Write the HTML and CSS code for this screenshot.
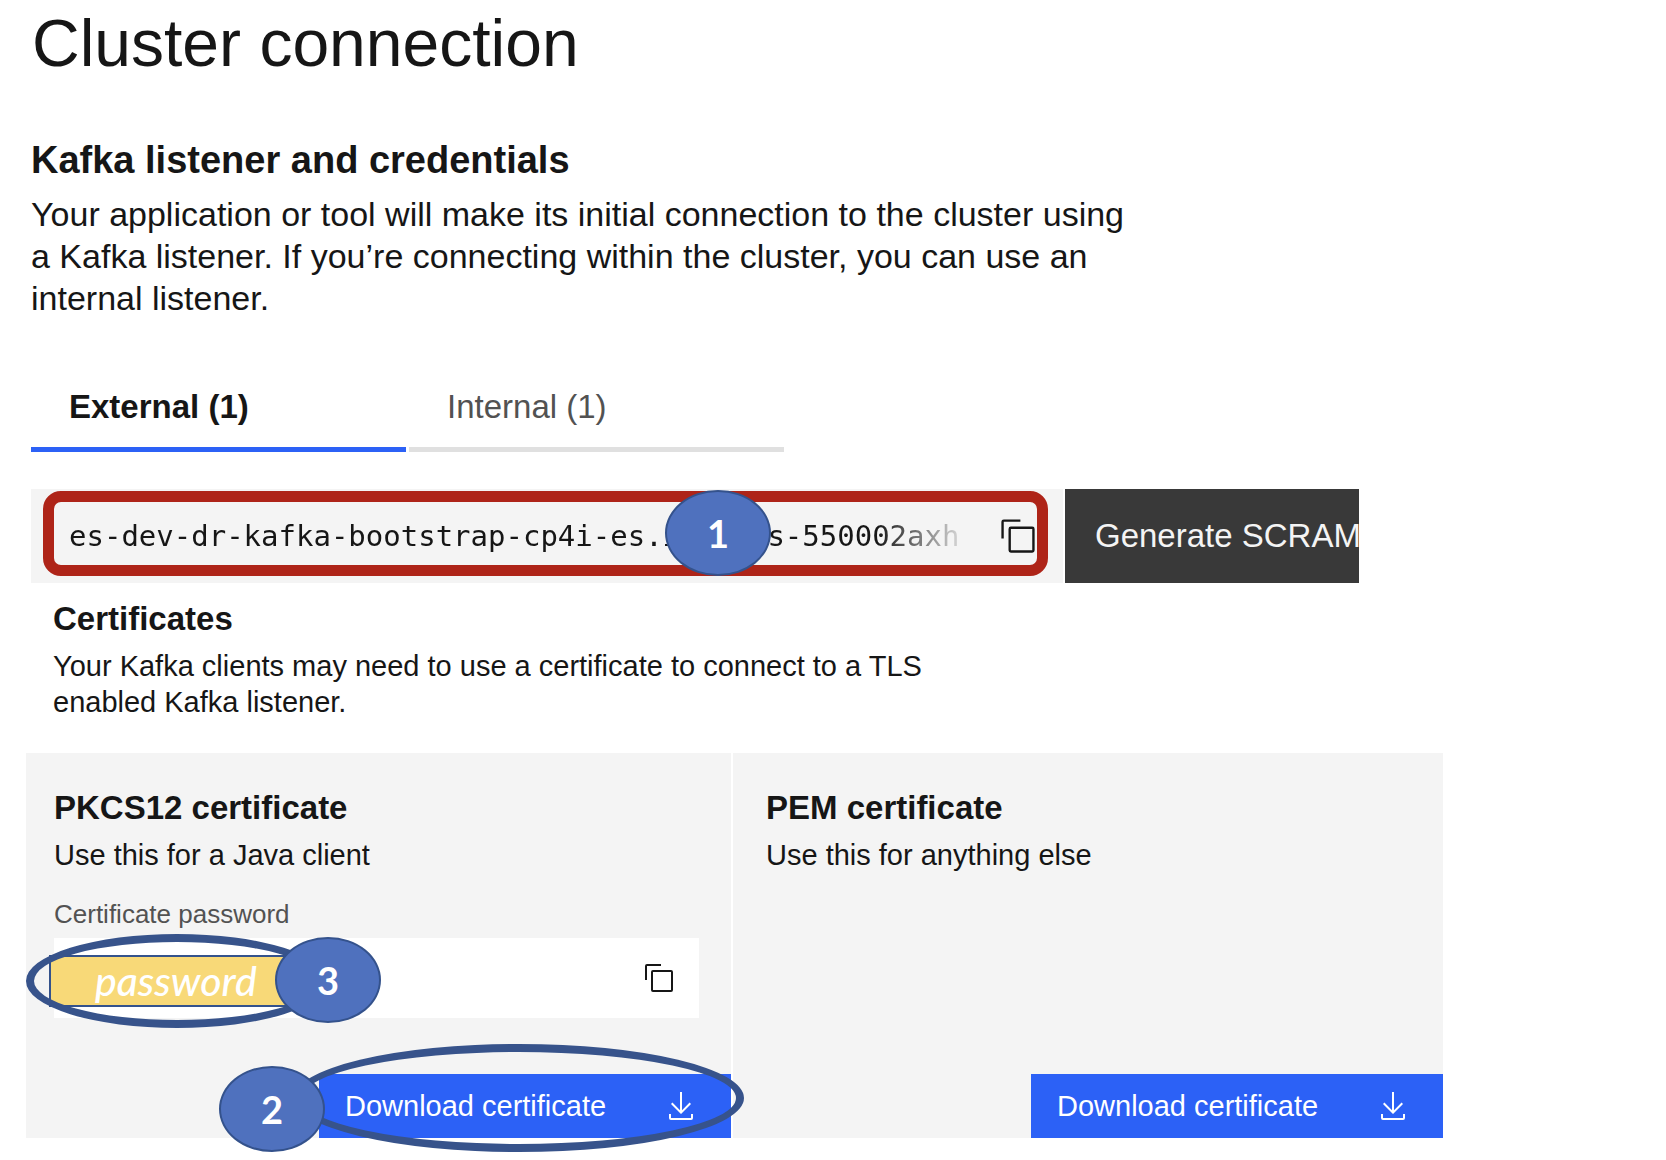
FILE: index.html
```html
<!DOCTYPE html>
<html lang="en">
<head>
  <meta charset="utf-8">
  <title>Cluster connection</title>
  <link rel="stylesheet" href="styles.css">
</head>
<body>
  <svg class="sprite" aria-hidden="true">
    <symbol id="icon-copy" viewBox="0 0 32 32">
      <path d="M28,10V28H10V10H28m0-2H10a2,2,0,0,0-2,2V28a2,2,0,0,0,2,2H28a2,2,0,0,0,2-2V10a2,2,0,0,0-2-2Z"/>
      <path d="M4,18H2V4A2,2,0,0,1,4,2H18V4H4Z"/>
    </symbol>
    <symbol id="icon-download" viewBox="0 0 32 32">
      <path d="M26,24v4H6V24H4v4a2,2,0,0,0,2,2H26a2,2,0,0,0,2-2V24Z"/>
      <path d="M26,14l-1.41-1.41L17,20.17V2H15V20.17L7.41,12.59,6,14,16,24Z"/>
    </symbol>
  </svg>

  <main class="page">
    <h1 class="page-title">Cluster connection</h1>

    <section class="listener">
      <h2 class="section-title">Kafka listener and credentials</h2>
      <p class="lead">Your application or tool will make its initial connection to the cluster using a Kafka listener. If you’re connecting within the cluster, you can use an internal listener.</p>

      <div class="tabs" role="tablist">
        <button class="tab tab-active" role="tab" aria-selected="true">External (1)</button>
        <button class="tab" role="tab" aria-selected="false">Internal (1)</button>
      </div>

      <div class="listener-row">
        <div class="address">
          <input class="address-input" type="text" readonly aria-label="Listener address" value="es-dev-dr-kafka-bootstrap-cp4i-es.itzroks-550002axh">
          <button class="icon-button" aria-label="Copy address"><svg class="icon icon-large"><use href="#icon-copy"/></svg></button>
          <span class="frame"></span>
          <span class="marker marker-one">1</span>
        </div>
        <button class="generate">Generate SCRAM</button>
      </div>
    </section>

    <section class="certificates">
      <h3 class="block-title">Certificates</h3>
      <p class="text certificates-text">Your Kafka clients may need to use a certificate to connect to a TLS enabled Kafka listener.</p>
    </section>

    <div class="cards">
      <section class="card">
        <h3 class="block-title">PKCS12 certificate</h3>
        <p class="text">Use this for a Java client</p>
        <label class="label" for="password">Certificate password</label>
        <div class="password">
          <input class="password-input" id="password" type="text" readonly>
          <button class="icon-button" aria-label="Copy password"><svg class="icon"><use href="#icon-copy"/></svg></button>
          <span class="cover">password</span>
          <span class="oval oval-password"></span>
          <span class="marker marker-three">3</span>
        </div>
        <div class="card-action">
          <button class="download">Download certificate <svg class="icon"><use href="#icon-download"/></svg></button>
          <span class="oval oval-download"></span>
          <span class="marker marker-two">2</span>
        </div>
      </section>
      <section class="card card-pem">
        <h3 class="block-title">PEM certificate</h3>
        <p class="text">Use this for anything else</p>
        <div class="card-action">
          <button class="download">Download certificate <svg class="icon"><use href="#icon-download"/></svg></button>
        </div>
      </section>
    </div>
  </main>
</body>
</html>
```

FILE: styles.css
```css
* {
  box-sizing: border-box;
}

body {
  margin: 0;
  background: #fff;
  color: #161616;
  font-family: "Liberation Sans", Arial, sans-serif;
}

h1, h2, h3, p {
  margin: 0;
}

button, input {
  margin: 0;
  padding: 0;
  border: 0;
  border-radius: 0;
  background: none;
  color: inherit;
  font: inherit;
}

.sprite {
  position: absolute;
  width: 0;
  height: 0;
}

.page {
  padding: 4px 26px 20px;
}

.page-title {
  padding-left: 6px;
  font-size: 66px;
  font-weight: 400;
  line-height: 78px;
}

.listener {
  padding: 54px 0 0 5px;
}

.section-title {
  font-size: 38px;
  line-height: 48px;
}

.lead {
  max-width: 1120px;
  margin-top: 9px;
  font-size: 34px;
  line-height: 42px;
}

.tabs {
  display: flex;
  gap: 3px;
  max-width: 753px;
  margin-top: 52px;
}

.tab {
  flex: 1;
  padding: 16px 38px 20px;
  border-bottom: 5px solid #e0e0e0;
  color: #525252;
  font-size: 33px;
  line-height: 40px;
  text-align: left;
}

.tab-active {
  border-color: #2c61f6;
  color: #161616;
  font-weight: 700;
}

.listener-row {
  display: flex;
  gap: 2px;
  max-width: 1328px;
  margin-top: 37px;
}

.address {
  position: relative;
  display: flex;
  flex: 1;
  align-items: center;
  gap: 26px;
  padding: 0 26px 0 38px;
  background: #f4f4f4;
}

.address-input {
  flex: 1;
  min-width: 0;
  height: 94px;
  font-family: "DejaVu Sans Mono", monospace;
  font-size: 29px;
  -webkit-mask-image: linear-gradient(to right, #000 calc(100% - 96px), transparent);
  mask-image: linear-gradient(to right, #000 calc(100% - 96px), transparent);
}

.generate {
  flex: none;
  width: 294px;
  overflow: hidden;
  padding-left: 30px;
  background: #393939;
  color: #f4f4f4;
  font-size: 33px;
  text-align: left;
  white-space: nowrap;
}

.icon-button {
  display: flex;
}

.icon {
  flex: none;
  width: 32px;
  height: 32px;
  fill: currentColor;
}

.icon-large {
  width: 38px;
  height: 38px;
}

.certificates {
  padding: 16px 0 33px 27px;
}

.block-title {
  font-size: 33px;
  line-height: 40px;
}

.text {
  margin-top: 9px;
  font-size: 29px;
  line-height: 36px;
}

.certificates-text {
  max-width: 900px;
}

.cards {
  display: grid;
  grid-template-columns: 705fr 710fr;
  gap: 2px;
  max-width: 1417px;
}

.card {
  display: flex;
  flex-direction: column;
  min-height: 385px;
  padding: 35px 0 0 28px;
  background: #f4f4f4;
}

.card-pem {
  padding-left: 33px;
}

.label {
  margin-top: 27px;
  color: #525252;
  font-size: 26px;
  line-height: 28px;
}

.password {
  position: relative;
  display: flex;
  align-items: center;
  margin: 10px 32px 0 0;
  padding-right: 24px;
  background: #fff;
}

.password-input {
  flex: 1;
  min-width: 0;
  height: 80px;
}

.card-action {
  position: relative;
  display: flex;
  justify-content: flex-end;
  margin-top: auto;
}

.download {
  display: flex;
  align-items: center;
  justify-content: space-between;
  width: 412px;
  height: 64px;
  padding: 0 34px 0 26px;
  background: #2c61f6;
  color: #fff;
  font-size: 29px;
}

/* Numbered call-outs laid over the controls */
.frame {
  position: absolute;
  top: 2px;
  right: 15px;
  bottom: 7px;
  left: 12px;
  border: 11px solid #ae2418;
  border-radius: 18px;
  pointer-events: none;
}

.marker {
  position: absolute;
  display: flex;
  align-items: center;
  justify-content: center;
  width: 106px;
  height: 86px;
  border: 2px solid #34528c;
  border-radius: 50%;
  background: #4f71be;
  color: #fff;
  font-family: Lato, sans-serif;
  font-size: 38px;
  font-weight: 700;
}

.marker-one {
  top: 1px;
  left: 634px;
}

.marker-two {
  top: -8px;
  right: 406px;
}

.marker-three {
  top: -1px;
  left: 221px;
}

.cover {
  position: absolute;
  top: 17px;
  left: -5px;
  width: 250px;
  height: 52px;
  padding-left: 44px;
  border: 2px solid #34528c;
  background: #f8d978;
  color: #fff;
  font-family: Lato, sans-serif;
  font-size: 41px;
  font-style: italic;
  font-weight: 500;
  line-height: 48px;
}

.oval {
  position: absolute;
  border: 8px solid #37538b;
  border-radius: 50%;
  pointer-events: none;
}

.oval-password {
  top: -4px;
  left: -28px;
  width: 302px;
  height: 94px;
}

.oval-download {
  top: -30px;
  right: -13px;
  width: 450px;
  height: 108px;
}
```
